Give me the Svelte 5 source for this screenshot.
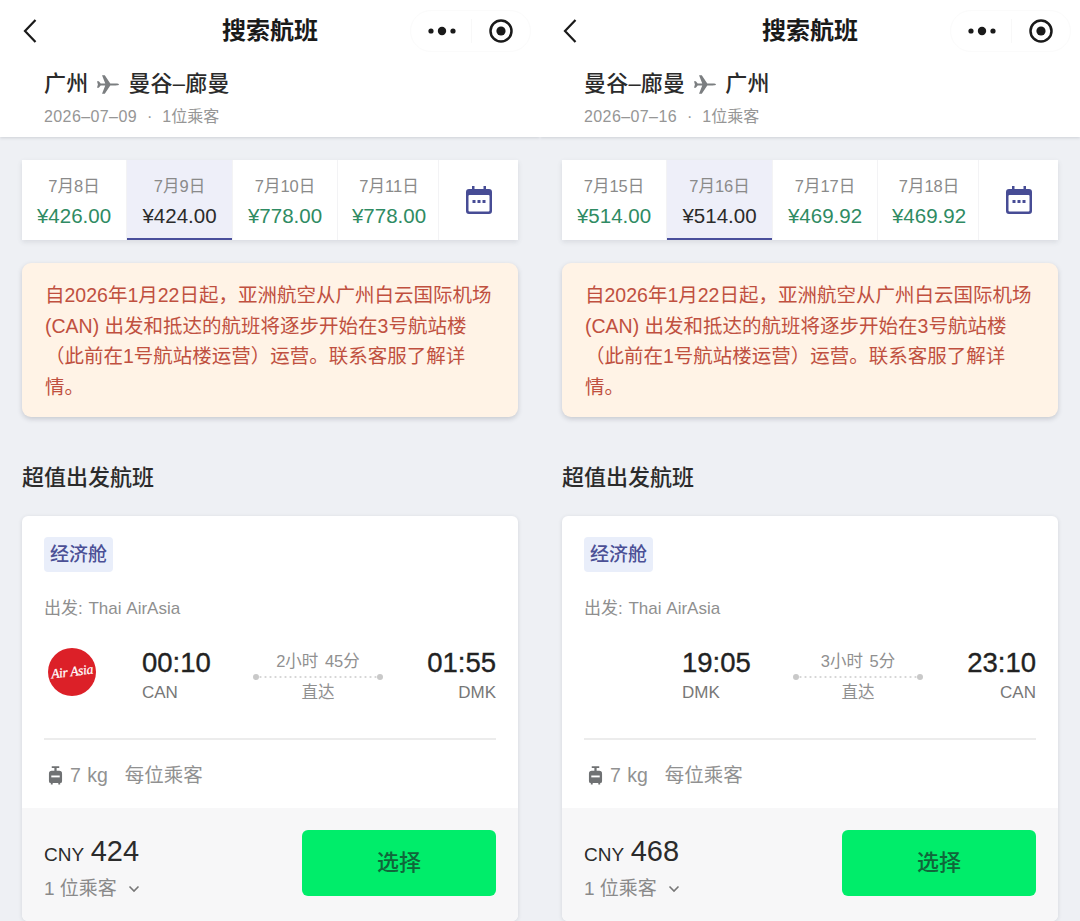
<script>
  const notice = [
    '自2026年1月22日起，亚洲航空从广州白云国际机场',
    '(CAN) 出发和抵达的航班将逐步开始在3号航站楼',
    '（此前在1号航站楼运营）运营。联系客服了解详',
    '情。'
  ];
  const panels = [
    {
      from: '广州', to: '曼谷–廊曼', sub: '2026–07–09', logo: true,
      dates: [['7月8日', '¥426.00'], ['7月9日', '¥424.00'], ['7月10日', '¥778.00'], ['7月11日', '¥778.00']],
      dep: '00:10', depCode: 'CAN', dur: '2小时 45分', arr: '01:55', arrCode: 'DMK', price: '424'
    },
    {
      from: '曼谷–廊曼', to: '广州', sub: '2026–07–16', logo: false,
      dates: [['7月15日', '¥514.00'], ['7月16日', '¥514.00'], ['7月17日', '¥469.92'], ['7月18日', '¥469.92']],
      dep: '19:05', depCode: 'DMK', dur: '3小时 5分', arr: '23:10', arrCode: 'CAN', price: '468'
    }
  ];
</script>

<div class="page">
  {#each panels as p}
    <section class="panel">
      <header class="head">
        <div class="nav">
          <svg class="back" viewBox="0 0 16 26" width="16" height="26"><path d="M13.5 2 3 13l10.500 11" fill="none" stroke="#1a1a1a" stroke-width="2.200"/></svg>
          <h1>搜索航班</h1>
          <div class="capsule">
            <svg viewBox="0 0 28 10" width="28" height="10"><circle cx="3" cy="5" r="2.600" fill="#1a1a1a"/><circle cx="14" cy="5" r="4.200" fill="#1a1a1a"/><circle cx="25" cy="5" r="2.600" fill="#1a1a1a"/></svg>
            <i class="sep"></i>
            <svg viewBox="0 0 26 26" width="26" height="26"><circle cx="13" cy="13" r="10.500" fill="none" stroke="#1a1a1a" stroke-width="2.500"/><circle cx="13" cy="13" r="4.600" fill="#1a1a1a"/></svg>
          </div>
        </div>
        <div class="route">
          <span>{p.from}</span>
          <svg viewBox="0 0 24 22" width="22" height="21"><path d="M0 7.500l2 0 2 2.500h5L5.500 1h3l6 9h6c2 0 3.500.4 3.500 1s-1.500 1-3.500 1h-6l-6 9h-3L9 12H4l-2 2.500H0l1-3.500z" fill="#7b7e80"/></svg>
          <span>{p.to}</span>
        </div>
        <div class="sub"><span class="ymd">{p.sub}</span><span class="dot">·</span>1位乘客</div>
      </header>

      <main class="body">
        <div class="dates">
          {#each p.dates as d, i}
            <div class="date" class:active={i === 1}>
              <span class="day">{d[0]}</span>
              <span class="fare">{d[1]}</span>
            </div>
          {/each}
          <div class="date cal">
            <svg viewBox="0 0 26 28" width="26" height="28">
              <path d="M6 0h2.500v3h9V0H20v3h3a3 3 0 0 1 3 3v19a3 3 0 0 1-3 3H3a3 3 0 0 1-3-3V6a3 3 0 0 1 3-3h3z" fill="#474c95"/>
              <rect x="2.500" y="9" width="21" height="16.500" rx="1" fill="#fff"/>
              <rect x="6.500" y="14" width="3" height="3" fill="#474c95"/><rect x="11.500" y="14" width="3" height="3" fill="#474c95"/><rect x="16.500" y="14" width="3" height="3" fill="#474c95"/>
            </svg>
          </div>
        </div>

        <div class="notice">
          {#each notice as line}<span>{line}</span>{/each}
        </div>

        <h2>超值出发航班</h2>

        <article class="card">
          <div class="info">
            <span class="badge">经济舱</span>
            <div class="carrier">出发: Thai AirAsia</div>
            <div class="flight">
              <div class="logo-cell">
                {#if p.logo}
                  <svg viewBox="0 0 48 48" width="48" height="48">
                    <circle cx="24" cy="24" r="24" fill="#dc2028"/>
                    <text x="24" y="28" text-anchor="middle" transform="rotate(-7 24 24)" class="logo-text">Air Asia</text>
                  </svg>
                {/if}
              </div>
              <div class="stop">
                <div class="time">{p.dep}</div>
                <div class="code">{p.depCode}</div>
              </div>
              <div class="mid">
                <div class="dur">{p.dur}</div>
                <div class="line"></div>
                <div class="direct">直达</div>
              </div>
              <div class="stop end">
                <div class="time">{p.arr}</div>
                <div class="code">{p.arrCode}</div>
              </div>
            </div>
            <div class="bag">
              <svg viewBox="0 0 16 20" width="15" height="19"><path d="M4 0h8v2H9.200v3H12a3 3 0 0 1 3 3v8a2 2 0 0 1-2 2v1.500h-2V18H5v1.500H3V18a2 2 0 0 1-2-2V8a3 3 0 0 1 3-3h2.800V2H4z" fill="#6f7173"/><rect x="3.500" y="10" width="9" height="2" fill="#fff"/></svg>
              <span class="kg">7 kg</span>
              <span>每位乘客</span>
            </div>
          </div>
          <div class="foot">
            <div>
              <div class="price"><span class="cny">CNY</span> {p.price}</div>
              <div class="pax">1 位乘客
                <svg viewBox="0 0 12 8" width="12" height="8"><path d="M1.500 1.500 6 6l4.500-4.500" fill="none" stroke="#777" stroke-width="1.600"/></svg>
              </div>
            </div>
            <button class="pick">选择</button>
          </div>
        </article>
      </main>
    </section>
  {/each}
</div>

<style>
  :global(body) {
    margin: 0;
    background: #eef0f4;
  }
  .page {
    display: grid;
    grid-template-columns: 540px 540px;
    height: 921px;
    overflow: hidden;
    font-family: "Liberation Sans", "Noto Sans CJK SC", sans-serif;
    color: #222;
  }
  .panel {
    display: flex;
    flex-direction: column;
    height: 921px;
    overflow: hidden;
    background: #eef0f4;
  }
  .head {
    height: 137px;
    flex: none;
    box-sizing: border-box;
    background: #fff;
    box-shadow: 0 1px 3px rgba(60, 64, 80, 0.18);
    position: relative;
  }
  .nav {
    height: 62px;
    display: grid;
    grid-template-columns: 1fr auto 1fr;
    align-items: center;
  }
  .back {
    margin-left: 22px;
  }
  h1 {
    margin: 0;
    font-size: 24px;
    font-weight: 700;
    color: #1a1a1a;
    line-height: 30px;
  }
  .capsule {
    justify-self: end;
    margin-right: 9px;
    box-sizing: border-box;
    width: 121px;
    height: 42px;
    border: 1px solid #fbfbfb;
    border-radius: 21px;
    display: flex;
    align-items: center;
    padding-left: 17px;
  }
  .sep {
    width: 1px;
    height: 24px;
    background: #f8f8f8;
    margin: 0 16px 0 15px;
  }
  .route {
    display: flex;
    align-items: center;
    gap: 9px;
    padding-left: 44px;
    height: 44px;
    font-size: 22px;
    letter-spacing: 0.200px;
    font-weight: 500;
    color: #2b2b2b;
    line-height: 44px;
  }
  .route svg {
    flex: none;
  }
  .sub {
    padding-left: 44px;
    margin-top: 1px;
    font-size: 16px;
    line-height: 20px;
    color: #969696;
  }
  .ymd {
    letter-spacing: 0.400px;
  }
  .dot {
    margin: 0 10px;
  }
  .body {
    padding: 23px 22px 0;
    flex: 1;
  }
  .dates {
    display: grid;
    grid-template-columns: 104px 105px 104px 100px 1fr;
    gap: 1px;
    height: 80px;
    background: #f3f3f5;
    box-shadow: 0 2px 5px rgba(60, 64, 80, 0.12);
  }
  .date {
    background: #fff;
    display: flex;
    flex-direction: column;
    align-items: center;
    justify-content: flex-start;
    box-sizing: border-box;
    padding-top: 14px;
  }
  .date:nth-child(4) {
    padding-left: 2px;
  }
  .date.cal {
    justify-content: center;
    padding-top: 0;
  }
  .date.active {
    background: #eeeff9;
    border-bottom: 2px solid #4a4f9c;
  }
  .day {
    font-size: 16.500px;
    line-height: 24px;
    color: #8a8a8a;
  }
  .fare {
    font-size: 20.500px;
    line-height: 36px;
    color: #2f8b63;
  }
  .active .fare {
    color: #2b2b2b;
  }
  .notice {
    margin-top: 23px;
    background: #fff3e6;
    border-radius: 9px;
    padding: 17px 0 15px 23px;
    box-shadow: 0 2px 5px rgba(60, 64, 80, 0.22);
    font-size: 19.500px;
    line-height: 30.500px;
    color: #c0503f;
    height: 154px;
    box-sizing: border-box;
  }
  .notice span {
    display: block;
    white-space: nowrap;
  }
  h2 {
    margin: 46px 0 23px;
    font-size: 22px;
    font-weight: 500;
    line-height: 30px;
    color: #2b2b2b;
  }
  .card {
    background: #fff;
    border-radius: 6px;
    box-shadow: 0 1px 4px rgba(60, 64, 80, 0.14);
    overflow: hidden;
  }
  .info {
    padding: 21px 22px 0;
    height: 292px;
    box-sizing: border-box;
  }
  .badge {
    display: inline-block;
    background: #e9eefa;
    color: #4b5096;
    font-size: 19px;
    line-height: 35px;
    padding: 0 6px;
    border-radius: 4px;
    font-weight: 500;
  }
  .carrier {
    margin-top: 25px;
    font-size: 17px;
    word-spacing: 1px;
    line-height: 24px;
    color: #8f8f8f;
  }
  .flight {
    margin-top: 23px;
    display: grid;
    grid-template-columns: 98px 111px 130px 1fr;
    height: 94px;
    border-bottom: 2px solid #ececec;
  }
  .logo-cell svg {
    display: block;
    margin: 4px 0 0 4px;
  }
  .logo-text {
    font-family: "Liberation Serif", serif;
    font-style: italic;
    font-size: 13.500px;
    letter-spacing: -0.300px;
    fill: #fff;
    stroke: #fff;
    stroke-width: 0.250px;
  }
  .time {
    font-size: 27.500px;
    line-height: 38px;
    -webkit-text-stroke: 0.350px #222;
    color: #222;
  }
  .code {
    font-size: 17px;
    line-height: 22px;
    color: #777;
  }
  .end {
    text-align: right;
  }
  .mid {
    text-align: center;
    color: #909090;
    font-size: 16.500px;
  }
  .dur {
    line-height: 24px;
    margin-top: 5px;
    word-spacing: 2px;
  }
  .line {
    height: 6px;
    margin: 1px 0 0;
    position: relative;
    background: radial-gradient(circle, #d6d6d6 1px, transparent 1.200px) 0 0 / 5px 6px repeat-x;
  }
  .line::before,
  .line::after {
    content: "";
    position: absolute;
    top: 0;
    width: 6px;
    height: 6px;
    border-radius: 50%;
    background: #c9c9c9;
  }
  .line::before {
    left: 0;
  }
  .line::after {
    right: 0;
  }
  .direct {
    line-height: 22px;
    margin-top: 1px;
  }
  .bag {
    margin-top: 22px;
    display: flex;
    align-items: center;
    font-size: 19.500px;
    line-height: 26px;
    color: #919191;
    padding-left: 4px;
  }
  .kg {
    margin: 0 17px 0 7px;
    word-spacing: 1px;
  }
  .foot {
    background: #f7f7f8;
    height: 113px;
    box-sizing: border-box;
    padding: 22px 22px 0;
    display: flex;
    justify-content: space-between;
    align-items: flex-start;
  }
  .price {
    font-size: 29px;
    line-height: 42px;
    color: #2b2b2b;
  }
  .cny {
    font-size: 19px;
    margin-right: -1.500px;
  }
  .pax {
    margin-top: -1px;
    font-size: 19px;
    line-height: 28px;
    color: #8a8a8a;
  }
  .pax svg {
    margin-left: 6px;
    vertical-align: 2px;
  }
  .pick {
    width: 194px;
    height: 66px;
    border: 0;
    border-radius: 6px;
    padding: 0 0 7px;
    background: #00ed6a;
    color: #10663a;
    font: 500 22px "Liberation Sans", "Noto Sans CJK SC", sans-serif;
  }
</style>
